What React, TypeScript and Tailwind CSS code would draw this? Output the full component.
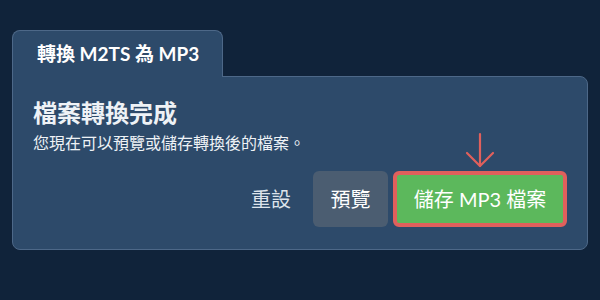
const font = { fontFamily: 'Lato, "Noto Sans CJK TC", sans-serif' };

function DownArrow() {
  return (
    <svg
      className="absolute -top-[39px] left-1/2 -translate-x-1/2"
      width="30"
      height="36"
      viewBox="0 0 30 36"
      fill="none"
      stroke="#e0605c"
      strokeWidth="2.2"
      strokeLinecap="round"
      strokeLinejoin="round"
    >
      <line x1="15" y1="2" x2="15" y2="34" />
      <polyline points="2,21 15,34 28,21" />
    </svg>
  );
}

export default function App() {
  return (
    <div className="min-h-[300px] w-[600px] bg-[#10233a] pl-3 pt-[30px]" style={font}>
      {/* tab */}
      <div className="relative z-10 -mb-px flex h-[47px] w-[211px] items-center rounded-t-lg border border-b-0 border-[#4d6888] bg-[#2d4a6a] pl-6">
        <span className="text-[19px] font-bold text-white">轉換 M2TS 為 MP3</span>
      </div>

      {/* panel */}
      <div className="h-[174px] w-[576px] rounded-tr-lg rounded-b-lg border border-[#4d6888] bg-[#2d4a6a] px-5 pt-[18px]">
        <h2 className="text-[24px] leading-[36px] font-semibold text-[#eef2f6]">檔案轉換完成</h2>
        <p className="text-[16px] leading-[24px] text-[#eef2f6]">您現在可以預覽或儲存轉換後的檔案。</p>

        <div className="mt-[16px] flex items-center justify-end">
          <button className="mr-[22px] text-[20px] text-[#dde4ec]">重設</button>
          <button className="h-[56px] w-[75px] rounded-md bg-[#4b5d71] text-[20px] text-white">預覽</button>
          <div className="relative ml-[5px]">
            <DownArrow />
            <button className="h-[56px] w-[174px] rounded-md border-4 border-[#e0605c] bg-[#5cb85c] text-[20px] text-white">
              儲存 MP3 檔案
            </button>
          </div>
        </div>
      </div>
    </div>
  );
}
